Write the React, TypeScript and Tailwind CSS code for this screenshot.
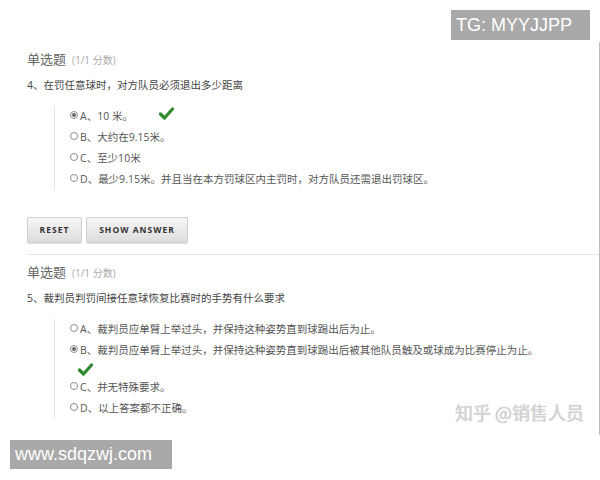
import React from 'react';

type Option = { label: string; text: string; checked?: boolean; correct?: boolean; checkBelow?: boolean };

const q1: Option[] = [
    { label: 'A', text: '10 米。', checked: true, correct: true },
    { label: 'B', text: '大约在9.15米。' },
    { label: 'C', text: '至少10米' },
    { label: 'D', text: '最少9.15米。并且当在本方罚球区内主罚时，对方队员还需退出罚球区。' },
];

const q2: Option[] = [
    { label: 'A', text: '裁判员应单臂上举过头，并保持这种姿势直到球踢出后为止。' },
    { label: 'B', text: '裁判员应单臂上举过头，并保持这种姿势直到球踢出后被其他队员触及或球成为比赛停止为止。', checked: true, correct: true, checkBelow: true },
    { label: 'C', text: '并无特殊要求。' },
    { label: 'D', text: '以上答案都不正确。' },
];

const Check = () => (
    <svg width="15" height="13" viewBox="0 0 15 13" className="block">
        <path d="M1.5 7 L5.5 11 L13.5 2" fill="none" stroke="#2f8a2f" strokeWidth="3.2" strokeLinecap="round" strokeLinejoin="round" />
    </svg>
);

const Radio = ({ checked }: { checked?: boolean }) => (
    <span className="w-[8px] h-[8px] rounded-full border border-[#8a8a8a] bg-white flex items-center justify-center shrink-0 -translate-y-[2px]">
        {checked && <span className="w-[4px] h-[4px] rounded-full bg-[#666]" />}
    </span>
);

const OptionList = ({ options }: { options: Option[] }) => (
    <div className="mt-[12px] ml-[27px] pl-[15px] border-l border-[#e2e2e2]">
        {options.map((o) => (
            <React.Fragment key={o.label}>
                <div className="h-[21px] flex items-center text-[10.5px] text-[#555]">
                    <Radio checked={o.checked} />
                    <span className="ml-[2px]">{o.label}、{o.text}</span>
                    {o.correct && !o.checkBelow && (
                        <span className="ml-[26px] -translate-y-[3px]">
                            <Check />
                        </span>
                    )}
                </div>
                {o.checkBelow && (
                    <div className="h-[16px] pl-[8px] flex items-center">
                        <Check />
                    </div>
                )}
            </React.Fragment>
        ))}
    </div>
);

const Header = ({ text }: { text: string }) => (
    <>
        <div className="h-[20px] flex items-center text-[13px] text-[#666]">
            单选题
            <span className="ml-[6px] text-[10px] text-[#aaa]">(1/1 分数)</span>
        </div>
        <div className="mt-[8px] h-[16px] flex items-center text-[10.5px] text-[#444]">{text}</div>
    </>
);

const btn =
    'h-[26px] rounded-[2px] border border-[#cfcfcf] bg-gradient-to-b from-[#f6f6f6] to-[#dddddd] shadow-[0_1px_1px_rgba(0,0,0,0.12)] text-[8.5px] font-bold tracking-[0.12em] text-[#333]';

export default function App() {
    return (
        <div
            className="relative w-[600px] h-[480px] bg-white overflow-hidden"
            style={{ fontFamily: '"Open Sans", "Noto Sans CJK SC", sans-serif' }}
        >
            <div className="mt-[42px] w-[600px] h-[393px] border-r border-[#bdbdbd] pl-[27px] pt-[8px]">
                <Header text="4、在罚任意球时，对方队员必须退出多少距离" />
                <OptionList options={q1} />

                <div className="mt-[27px] flex gap-[4px]">
                    <button className={`${btn} w-[55px]`}>RESET</button>
                    <button className={`${btn} w-[102px]`}>SHOW ANSWER</button>
                </div>
                <div className="mt-[11px] mb-[8px] border-t border-[#e6e6e6]" />

                <Header text="5、裁判员判罚间接任意球恢复比赛时的手势有什么要求" />
                <OptionList options={q2} />
            </div>

            <div
                className="absolute left-[455px] top-[399px] text-[18px] text-[#d4d4d4] [text-shadow:0_0_1px_#bbb]"
                style={{ fontFamily: '"Noto Sans CJK SC", sans-serif' }}
            >
                知乎 @销售人员
            </div>

            <div
                className="absolute left-[451px] top-[10px] w-[139px] h-[30px] bg-[#a9a9a9] text-white text-[18px] pl-[5px] flex items-center"
                style={{ fontFamily: '"Liberation Sans", Arial, sans-serif' }}
            >
                TG: MYYJJPP
            </div>
            <div
                className="absolute left-[10px] top-[440px] w-[162px] h-[29px] bg-[#a9a9a9] text-white text-[18px] pl-[5px] flex items-center"
                style={{ fontFamily: '"Liberation Sans", Arial, sans-serif' }}
            >
                www.sdqzwj.com
            </div>
        </div>
    );
}
